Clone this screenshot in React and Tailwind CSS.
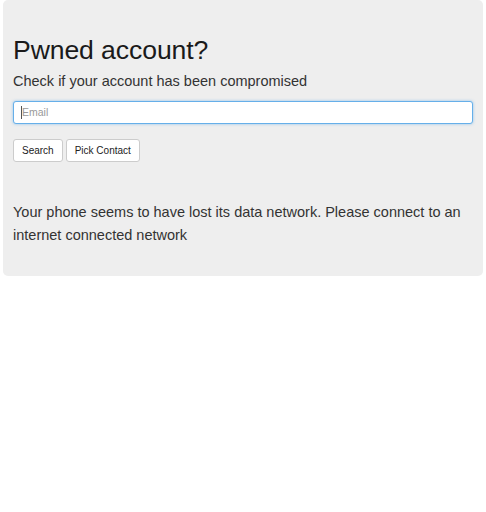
export default function App() {
  return (
    <div className="min-h-[512px] bg-white" style={{ fontFamily: '"Liberation Sans", Arial, sans-serif' }}>
      <div className="mx-[3px] rounded-[5px] bg-[#eeeeee] px-[10px] pt-[35px] pb-[29px] text-[#222]">
        <h1 className="text-[26.6px] leading-[30px] text-[#1a1a1a] tracking-[-0.1px]">Pwned account?</h1>
        <p className="mt-[7px] text-[14.5px] leading-[18px] text-[#333]">Check if your account has been compromised</p>
        <div className="mt-[11px] flex h-[23px] items-center rounded-[3px] border border-[#66afe9] bg-white px-[7px] shadow-[0_0_3px_rgba(102,175,233,0.7)]">
          <span className="h-[13px] w-px bg-[#555]"></span>
          <span className="text-[10.5px] text-[#999]">Email</span>
        </div>
        <div className="mt-[15px] flex gap-[3px]">
          <button className="h-[23px] rounded-[3px] border border-[#ccc] bg-white px-[8px] text-[10px] text-[#222]">Search</button>
          <button className="h-[23px] rounded-[3px] border border-[#ccc] bg-white px-[8px] text-[10px] text-[#222]">Pick Contact</button>
        </div>
        <p className="mt-[39px] pr-[8px] text-[14.5px] leading-[23px] text-[#333]">
          Your phone seems to have lost its data network. Please connect to an internet connected network
        </p>
      </div>
    </div>
  );
}
